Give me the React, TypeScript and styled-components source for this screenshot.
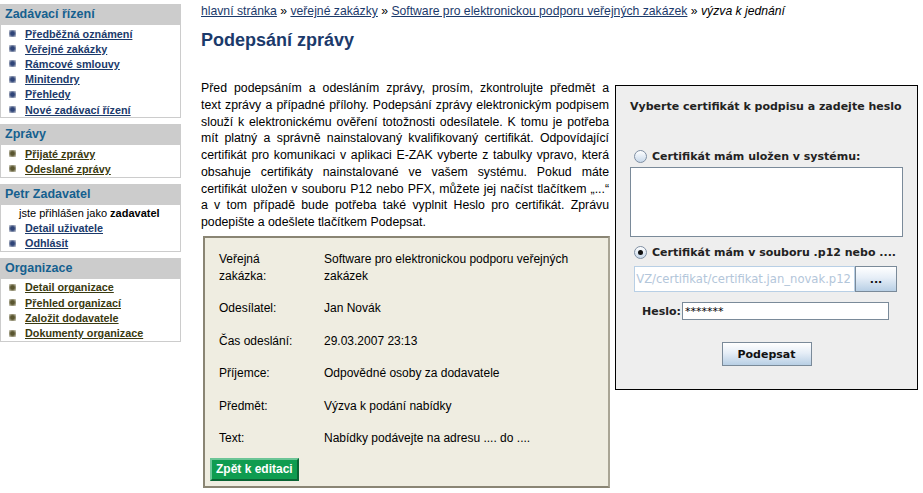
import React from "react";
import styled, { createGlobalStyle } from "styled-components";

const GlobalStyle = createGlobalStyle`
  html, body {
    margin: 0;
    padding: 0;
    background: #ffffff;
  }
  body {
    font-family: "Liberation Sans", Arial, sans-serif;
    font-size: 12px;
    color: #000;
  }
`;

const Page = styled.div`
  display: flex;
  align-items: flex-start;
  width: 923px;
  height: 493px;
  overflow: hidden;
`;

const Sidebar = styled.div`
  width: 181px;
  padding-top: 4px;
  display: flex;
  flex-direction: column;
  gap: 6px;
`;

const Section = styled.div`
  display: flex;
  flex-direction: column;
`;

const SectionHead = styled.div`
  height: 21px;
  line-height: 21px;
  background: #cccccc;
  padding-left: 5px;
  font-weight: bold;
  font-size: 12.5px;
  color: #15608f;
`;

const SectionBody = styled.ul`
  margin: 0;
  padding: 1px 0 0 0;
  list-style: none;
  background: #fff;
  border: 1px solid #cccccc;
  border-top: none;
`;

const Item = styled.li<{ $tone: "blue" | "olive" }>`
  display: flex;
  align-items: center;
  height: 15.2px;
  padding-left: 8px;
  gap: 9px;

  a {
    font-size: 10.8px;
    font-weight: bold;
    text-decoration: underline;
    color: ${({ $tone }) => ($tone === "blue" ? "#1b3a6b" : "#3a3a10")};
  }

  &::before {
    content: "";
    width: 7px;
    height: 7px;
    border-radius: 1px;
    background: ${({ $tone }) =>
      $tone === "blue"
        ? "radial-gradient(circle, #2f4478 35%, #a3abbe 75%)"
        : "radial-gradient(circle, #5a5630 35%, #b3b09a 75%)"};
  }
`;

const LoggedAs = styled.li`
  height: 15px;
  line-height: 15px;
  padding-left: 18px;
  font-size: 11px;
  b {
    font-weight: bold;
  }
`;

const Main = styled.div`
  flex: 1;
  padding-left: 20px;
  display: flex;
  flex-direction: column;
`;

const Breadcrumb = styled.div`
  padding-top: 3px;
  line-height: 16px;
  font-size: 12.2px;
  color: #000;

  a {
    color: #1b3a6b;
    text-decoration: underline;
  }
  em {
    font-style: italic;
  }
`;

const Title = styled.h1`
  margin: 10px 0 0 0;
  font-size: 18px;
  line-height: 22px;
  font-weight: bold;
  color: #1b3a6b;
`;

const Content = styled.div`
  margin-top: 29px;
  display: flex;
  align-items: flex-start;
  gap: 6px;
`;

const LeftColumn = styled.div`
  width: 408px;
  display: flex;
  flex-direction: column;
`;

const Intro = styled.p`
  margin: 0;
  font-size: 12.3px;
  line-height: 16.75px;
`;

const IntroLine = styled.span<{ $last?: boolean }>`
  display: block;
  white-space: nowrap;
  text-align: justify;
  text-align-last: ${({ $last }) => ($last ? "left" : "justify")};
`;

const DetailBox = styled.div`
  margin: 5px 0 0 2px;
  width: 393px;
  padding: 5px;
  background: #efede1;
  border: 2px solid #8a8574;
  border-right-color: #a9a595;
  display: flex;
  flex-direction: column;
  align-items: flex-start;
`;

const DetailTable = styled.table`
  border-collapse: collapse;
  font-size: 12px;

  td {
    padding: 7.75px 9px;
    line-height: 17px;
    vertical-align: top;
  }
  td:first-child {
    width: 87px;
  }
  td:last-child {
    width: 250px;
  }
`;

const GreenButton = styled.button`
  margin-top: 3px;
  height: 23px;
  padding: 0 4px;
  background: #0f9c50;
  color: #fff;
  font-family: "Liberation Sans", Arial, sans-serif;
  font-weight: bold;
  font-size: 12px;
  border: 2px solid;
  border-color: #6cc596 #0a6434 #0a6434 #6cc596;
  cursor: pointer;
`;

const Applet = styled.div`
  margin-top: 5px;
  width: 303px;
  height: 305px;
  background: #eeeeee;
  border: 1px solid #000;
  font-family: "DejaVu Sans", sans-serif;
  font-size: 11px;
  font-weight: bold;
  color: #222;
  display: flex;
  flex-direction: column;
  padding: 0 14px;
  box-sizing: border-box;
`;

const AppletTitle = styled.div`
  margin-top: 13px;
  line-height: 16px;
  white-space: nowrap;
`;

const RadioRow = styled.div<{ $top: number }>`
  margin-top: ${({ $top }) => $top}px;
  margin-left: 4px;
  display: flex;
  align-items: center;
  gap: 5px;
  height: 16px;
  white-space: nowrap;
`;

const Radio = styled.span<{ $checked?: boolean }>`
  position: relative;
  width: 11px;
  height: 11px;
  border-radius: 50%;
  border: 1px solid #7f8fa3;
  background: linear-gradient(#ffffff, #c8d8ea);

  &::after {
    content: "";
    display: ${({ $checked }) => ($checked ? "block" : "none")};
    position: absolute;
    left: 3px;
    top: 3px;
    width: 5px;
    height: 5px;
    border-radius: 50%;
    background: #111;
  }
`;

const CertList = styled.div`
  margin-top: 3px;
  height: 68px;
  background: #fff;
  border: 1px solid #7a8a99;
`;

const FileRow = styled.div`
  margin: 6px 6px 0 4px;
  display: flex;
  height: 26px;
`;

const FileField = styled.div`
  flex: 1;
  background: #fff;
  border: 1px solid #b8cfe5;
  display: flex;
  justify-content: flex-end;
  align-items: center;
  overflow: hidden;
  padding-right: 3px;
  font-weight: normal;
  font-size: 11.6px;
  color: #b3c6da;
  white-space: nowrap;
`;

const JavaButton = styled.button<{ $width: number }>`
  width: ${({ $width }) => $width}px;
  height: 100%;
  border: 1px solid #7a8a99;
  background: linear-gradient(#ffffff 0%, #e6eef7 45%, #b8cfe5 100%);
  font-family: "DejaVu Sans", sans-serif;
  font-weight: bold;
  font-size: 11px;
  color: #111;
  padding: 0;
  cursor: pointer;
`;

const PasswordRow = styled.div`
  margin: 10px 0 0 12px;
  display: flex;
  align-items: center;
  height: 18px;
  gap: 1px;
`;

const PasswordField = styled.div`
  width: 203px;
  height: 16px;
  background: #fff;
  border: 1px solid #7a8a99;
  font-weight: normal;
  font-size: 11px;
  line-height: 17px;
  padding-left: 2px;
  color: #000;
`;

const ButtonRow = styled.div`
  margin-top: 22px;
  height: 24px;
  display: flex;
  justify-content: center;
`;

const mainLinks = [
  "Předběžná oznámení",
  "Veřejné zakázky",
  "Rámcové smlouvy",
  "Minitendry",
  "Přehledy",
  "Nové zadávací řízení",
];

const messageLinks = ["Přijaté zprávy", "Odeslané zprávy"];

const orgLinks = [
  "Detail organizace",
  "Přehled organizací",
  "Založit dodavatele",
  "Dokumenty organizace",
];

const introLines = [
  "Před podepsáním a odesláním zprávy, prosím, zkontrolujte předmět a",
  "text zprávy a případné přílohy. Podepsání zprávy elektronickým podpisem",
  "slouží k elektronickému ověření totožnosti odesílatele. K tomu je potřeba",
  "mít platný a správně nainstalovaný kvalifikovaný certifikát. Odpovídající",
  "certifikát pro komunikaci v aplikaci E-ZAK vyberte z tabulky vpravo, která",
  "obsahuje certifikáty nainstalované ve vašem systému. Pokud máte",
  "certifikát uložen v souboru P12 nebo PFX, můžete jej načíst tlačítkem „...“",
  "a v tom případě bude potřeba také vyplnit Heslo pro certifikát. Zprávu",
  "podepište a odešlete tlačítkem Podepsat.",
];

const details: Array<[string, string]> = [
  ["Veřejná zakázka:", "Software pro elektronickou podporu veřejných zakázek"],
  ["Odesílatel:", "Jan Novák"],
  ["Čas odeslání:", "29.03.2007 23:13"],
  ["Příjemce:", "Odpovědné osoby za dodavatele"],
  ["Předmět:", "Výzva k podání nabídky"],
  ["Text:", "Nabídky podávejte na adresu .... do ...."],
];

export default function App() {
  return (
    <>
      <GlobalStyle />
      <Page>
        <Sidebar>
          <Section>
            <SectionHead>Zadávací řízení</SectionHead>
            <SectionBody>
              {mainLinks.map((l) => (
                <Item key={l} $tone="blue">
                  <a href="#">{l}</a>
                </Item>
              ))}
            </SectionBody>
          </Section>
          <Section>
            <SectionHead>Zprávy</SectionHead>
            <SectionBody>
              {messageLinks.map((l) => (
                <Item key={l} $tone="olive">
                  <a href="#">{l}</a>
                </Item>
              ))}
            </SectionBody>
          </Section>
          <Section>
            <SectionHead>Petr Zadavatel</SectionHead>
            <SectionBody>
              <LoggedAs>
                jste přihlášen jako <b>zadavatel</b>
              </LoggedAs>
              <Item $tone="blue">
                <a href="#">Detail uživatele</a>
              </Item>
              <Item $tone="blue">
                <a href="#">Odhlásit</a>
              </Item>
            </SectionBody>
          </Section>
          <Section>
            <SectionHead>Organizace</SectionHead>
            <SectionBody>
              {orgLinks.map((l) => (
                <Item key={l} $tone="olive">
                  <a href="#">{l}</a>
                </Item>
              ))}
            </SectionBody>
          </Section>
        </Sidebar>

        <Main>
          <Breadcrumb>
            <a href="#">hlavní stránka</a> » <a href="#">veřejné zakázky</a> »{" "}
            <a href="#">Software pro elektronickou podporu veřejných zakázek</a> »{" "}
            <em>výzva k jednání</em>
          </Breadcrumb>
          <Title>Podepsání zprávy</Title>

          <Content>
            <LeftColumn>
              <Intro>
                {introLines.map((line, i) => (
                  <IntroLine key={i} $last={i === introLines.length - 1}>
                    {line}
                  </IntroLine>
                ))}
              </Intro>
              <DetailBox>
                <DetailTable>
                  <tbody>
                    {details.map(([label, value]) => (
                      <tr key={label}>
                        <td>{label}</td>
                        <td>{value}</td>
                      </tr>
                    ))}
                  </tbody>
                </DetailTable>
                <GreenButton>Zpět k editaci</GreenButton>
              </DetailBox>
            </LeftColumn>

            <Applet>
              <AppletTitle>Vyberte certifikát k podpisu a zadejte heslo</AppletTitle>
              <RadioRow $top={33}>
                <Radio />
                Certifikát mám uložen v systému:
              </RadioRow>
              <CertList />
              <RadioRow $top={7}>
                <Radio $checked />
                Certifikát mám v souboru .p12 nebo ....
              </RadioRow>
              <FileRow>
                <FileField>VZ/certifikat/certifikat.jan_novak.p12</FileField>
                <JavaButton $width={42}>...</JavaButton>
              </FileRow>
              <PasswordRow>
                Heslo:
                <PasswordField>*******</PasswordField>
              </PasswordRow>
              <ButtonRow>
                <JavaButton $width={90}>Podepsat</JavaButton>
              </ButtonRow>
            </Applet>
          </Content>
        </Main>
      </Page>
    </>
  );
}
